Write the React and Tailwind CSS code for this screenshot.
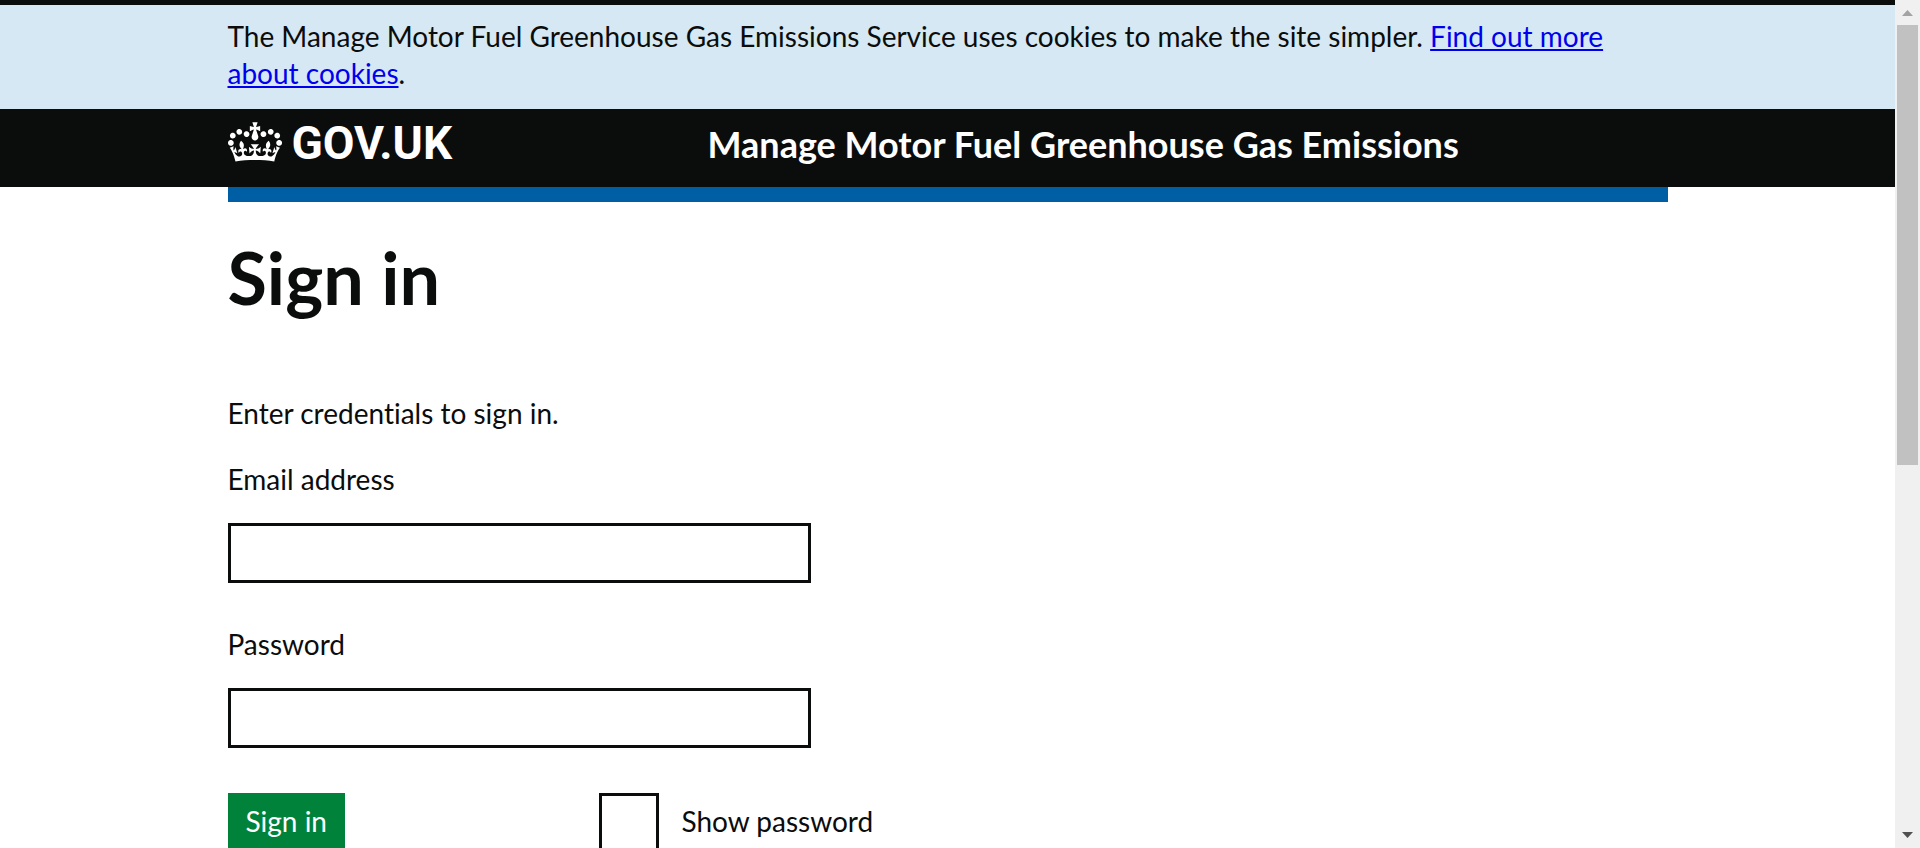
import React from "react";

function Crown() {
  return (
    <svg aria-hidden="true" focusable="false" viewBox="0 0 132 97" className="h-10 w-[54px] shrink-0" fill="currentColor">
      <path
        fillRule="evenodd"
        d="M25 30.2c3.5 1.5 7.7-.2 9.1-3.7 1.5-3.6-.2-7.8-3.9-9.2-3.6-1.4-7.6.3-9.1 3.9-1.4 3.5.3 7.5 3.9 9zM9 39.5c3.6 1.5 7.8-.2 9.2-3.7 1.5-3.6-.2-7.8-3.9-9.1-3.6-1.5-7.6.2-9.1 3.8-1.4 3.5.3 7.5 3.8 9zM4.4 57.2c3.5 1.5 7.7-.2 9.1-3.8 1.5-3.6-.2-7.7-3.9-9.1-3.5-1.5-7.6.3-9.1 3.8-1.4 3.5.3 7.6 3.9 9.1zm38.3-21.4c3.5 1.5 7.7-.2 9.1-3.8 1.5-3.6-.2-7.7-3.9-9.1-3.6-1.5-7.6.3-9.1 3.8-1.3 3.6.4 7.7 3.9 9.1zm64.4-5.6c-3.6 1.5-7.8-.2-9.1-3.7-1.5-3.6.2-7.8 3.8-9.2 3.6-1.4 7.7.3 9.2 3.9 1.3 3.5-.4 7.5-3.9 9zm15.9 9.3c-3.6 1.5-7.7-.2-9.1-3.7-1.5-3.6.2-7.8 3.7-9.1 3.6-1.5 7.7.2 9.2 3.8 1.5 3.5-.3 7.5-3.8 9zm4.7 17.7c-3.6 1.5-7.8-.2-9.2-3.8-1.5-3.6.2-7.7 3.9-9.1 3.6-1.5 7.7.3 9.2 3.8 1.3 3.5-.4 7.6-3.9 9.1zM89.3 35.8c-3.6 1.5-7.8-.2-9.2-3.8-1.4-3.6.2-7.7 3.9-9.1 3.6-1.5 7.7.3 9.2 3.8 1.4 3.6-.3 7.7-3.9 9.1zM69.7 17.7l8.9 4.7V9.3l-8.9 2.8c-.2-.3-.5-.6-.9-.9L72.4 0H59.6l3.5 11.2c-.3.3-.6.5-.9.9l-8.8-2.8v13.1l8.8-4.7c.3.3.6.7.9.9l-5 15.4v.1c-.2.8-.4 1.6-.4 2.4 0 4.1 3.1 7.5 7 8.1h.2c.3 0 .7.1 1 .1.4 0 .7 0 1-.1h.2c4-.6 7.1-4.1 7.1-8.1 0-.8-.1-1.7-.4-2.4V34l-5.1-15.4c.4-.2.7-.6 1-.9zM66 92.8c16.9 0 32.8 1.1 47.1 3.2 4-16.9 8.9-26.7 14-33.5l-9.6-3.4c1 4.9 1.1 7.2 0 10.2-1.5-1.4-3-4.3-4.2-8.7L108.6 76c2.8-2 5-3.2 7.5-3.3-4.4 9.4-10 11.9-13.6 11.2-4.3-.8-6.3-4.6-5.6-7.9 1-4.7 5.7-5.9 8-.5 4.3-8.7-3-11.4-7.6-8.8 7.1-7.2 7.9-13.5 2.1-21.1-8 6.1-8.1 12.3-4.5 20.8-4.7-5.4-12.1-2.5-9.5 6.2 3.4-5.2 7.9-2 7.2 3.1-.6 4.3-6.4 7.8-13.5 7.2-10.3-.9-10.9-8-11.2-13.8 2.5-.5 7.1 1.8 11 7.3L80.2 60c-4.1 4.4-8 5.3-12.3 5.4 1.4-4.4 8-11.6 8-11.6H55.5s6.4 7.2 7.9 11.6c-4.2-.1-8-1-12.3-5.4l1.4 16.4c3.9-5.5 8.5-7.7 10.9-7.3-.3 5.8-.9 12.8-11.1 13.8-7.2.6-12.9-2.9-13.5-7.2-.7-5 3.8-8.3 7.1-3.1 2.7-8.7-4.6-11.6-9.4-6.2 3.7-8.5 3.6-14.7-4.6-20.8-5.8 7.6-5 13.9 2.2 21.1-4.7-2.6-11.9.1-7.7 8.8 2.3-5.5 7.1-4.2 8.1.5.7 3.3-1.3 7.1-5.7 7.9-3.5.7-9-1.8-13.5-11.2 2.5.1 4.7 1.3 7.5 3.3l-4.7-15.4c-1.2 4.4-2.7 7.2-4.3 8.7-1.1-3-.9-5.3 0-10.2l-9.5 3.4c5 6.9 9.9 16.7 14 33.5 14.8-2.1 30.8-3.2 47.7-3.2z"
      />
    </svg>
  );
}

function Container({ className = "", children }) {
  return <div className={`mx-auto w-full max-w-[1440px] ${className}`}>{children}</div>;
}

function Field({ id, label, type }) {
  return (
    <div className="flex flex-col">
      <label htmlFor={id}>{label}</label>
      <input
        id={id}
        name={id}
        type={type}
        className="mt-[25px] h-[60px] w-full max-w-[583px] border-3 border-[#0b0c0c] bg-white px-2 outline-none focus:ring-4 focus:ring-[#ffdd00]"
      />
    </div>
  );
}

function ScrollTrack() {
  return (
    <div aria-hidden="true" className="flex w-[25px] shrink-0 flex-col items-center bg-[#f0f0f0]">
      <svg viewBox="0 0 25 25" className="h-[25px] w-[25px] shrink-0">
        <path d="M7 16h11l-5.5-6z" fill="#a3a3a3" />
      </svg>
      <div className="h-[440px] w-[21px] bg-[#c1c1c1]" />
      <svg viewBox="0 0 25 25" className="mt-auto h-[25px] w-[25px] shrink-0">
        <path d="M7 9h11l-5.5 6z" fill="#505050" />
      </svg>
    </div>
  );
}

export default function App() {
  return (
    <div className="flex h-screen overflow-hidden bg-white font-['Lato','Liberation_Sans',sans-serif] text-[28px] leading-[37px] text-[#0b0c0c] [font-variant-ligatures:none]">
      <div className="min-w-0 flex-1 overflow-hidden">
        <div className="border-t-5 border-[#0b0c0c] bg-[#d5e8f3] pt-[13px] pb-[17px]">
          <Container>
            <p>
              The Manage Motor Fuel Greenhouse Gas Emissions Service uses cookies to make the site simpler.{" "}
              <a href="#cookies" className="text-[#0000ee] underline decoration-2 underline-offset-2">
                Find out more about cookies
              </a>
              .
            </p>
          </Container>
        </div>

        <header className="bg-[#0b0c0c] text-white">
          <Container className="flex h-[78px] items-start pt-[13px]">
            <a href="#home" className="flex w-1/3 shrink-0 items-start gap-2.5">
              <Crown />
              <span className="font-['Roboto','Liberation_Sans',sans-serif] text-[46px] leading-[43px] font-bold">
                GOV.UK
              </span>
            </a>
            <a href="#service" className="text-[36px] leading-[45px] font-bold whitespace-nowrap">
              Manage Motor Fuel Greenhouse Gas Emissions
            </a>
          </Container>
        </header>
        <Container className="h-[15px] bg-[#005ea5]" />

        <Container>
          <main className="pt-[38px]">
            <h1 className="text-[72px] leading-[75px] font-bold">Sign in</h1>
            <p className="mt-20">Enter credentials to sign in.</p>
            <form className="mt-[29px]" onSubmit={(e) => e.preventDefault()}>
              <div className="flex flex-col gap-[43px]">
                <Field id="email" label="Email address" type="email" />
                <Field id="password" label="Password" type="password" />
              </div>
              <div className="mt-[45px] flex">
                <div className="w-[371px]">
                  <button type="submit" className="h-[60px] bg-[#00823b] px-[18px] pb-1 text-white">
                    Sign in
                  </button>
                </div>
                <div className="flex items-center gap-[23px]">
                  <input
                    id="show-password"
                    type="checkbox"
                    className="size-[60px] appearance-none border-3 border-[#0b0c0c] bg-white checked:bg-[#0b0c0c]"
                  />
                  <label htmlFor="show-password" className="pb-1">
                    Show password
                  </label>
                </div>
              </div>
            </form>
          </main>
        </Container>
      </div>
      <ScrollTrack />
    </div>
  );
}
